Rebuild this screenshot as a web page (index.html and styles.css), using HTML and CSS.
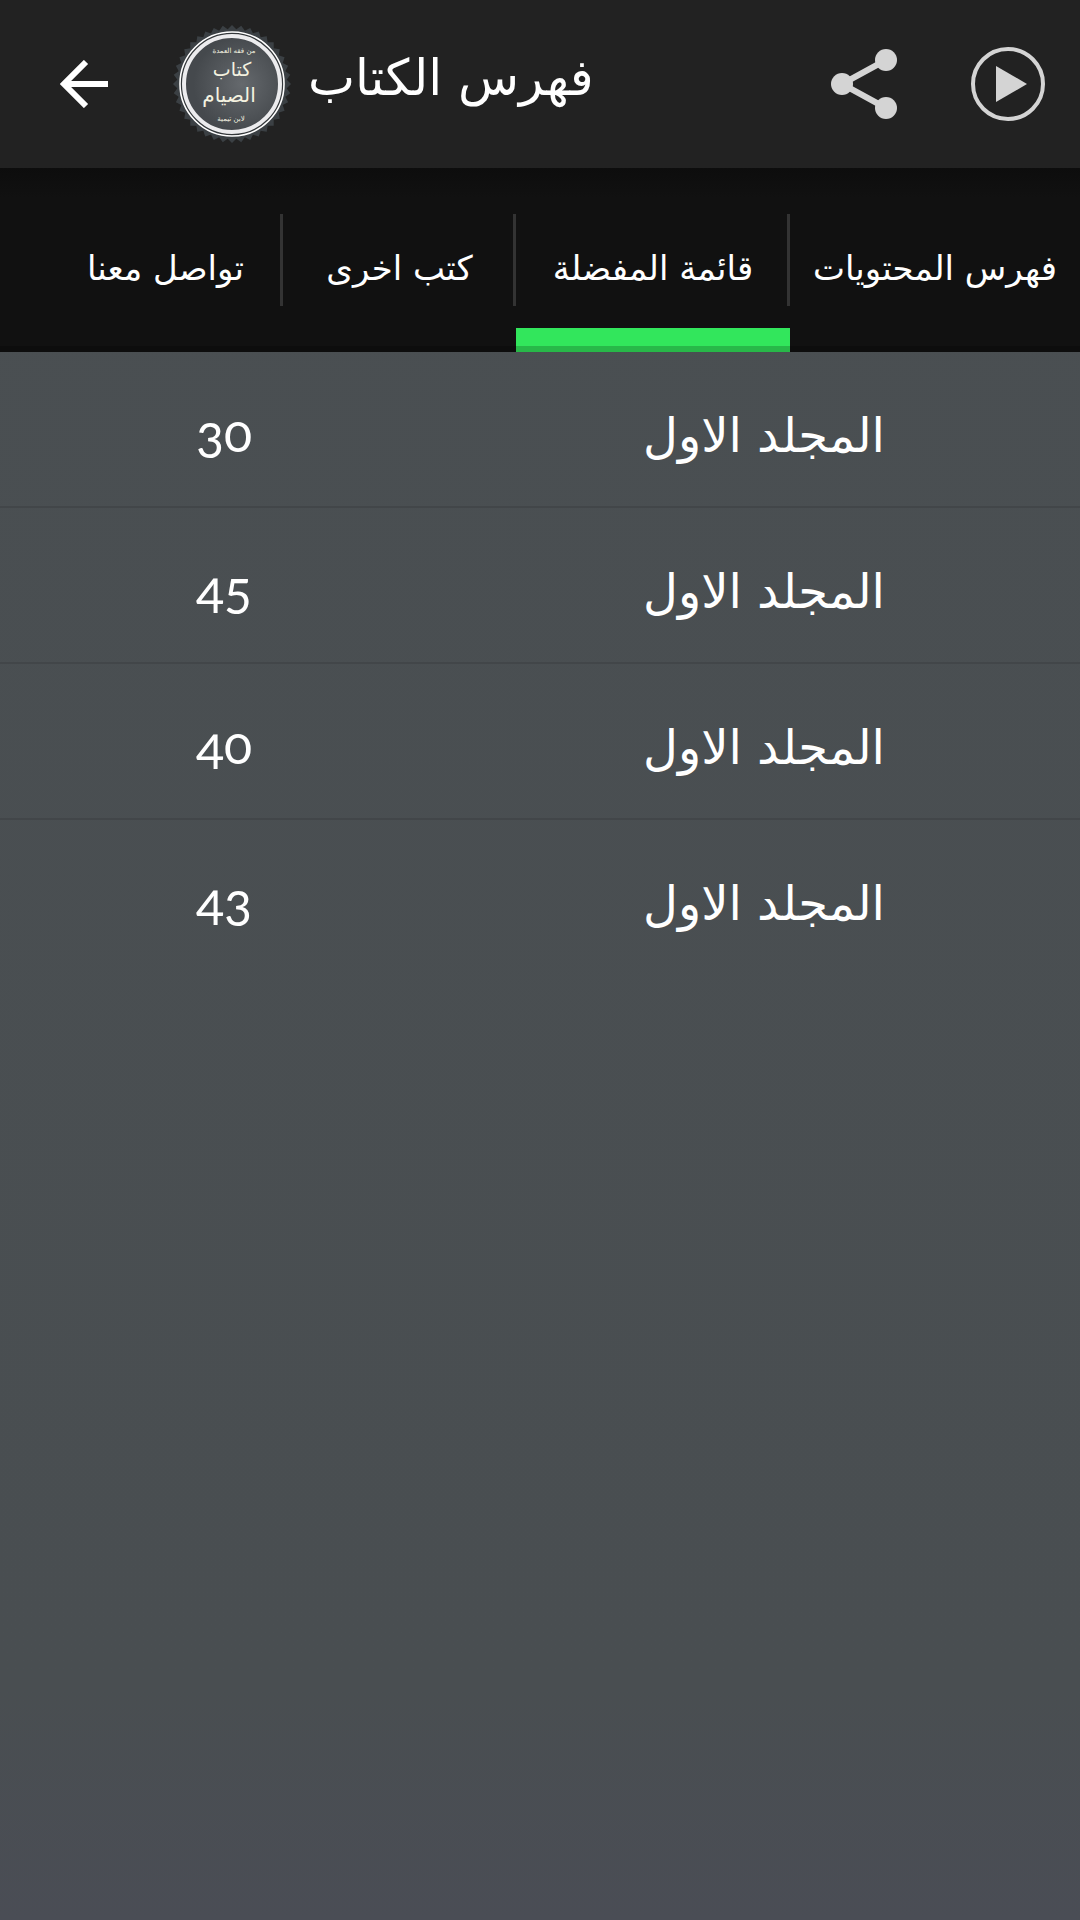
FILE: index.html
```html
<!DOCTYPE html>
<html lang="ar" dir="rtl">
<head>
    <meta charset="UTF-8">
    <meta name="viewport" content="width=device-width, initial-scale=1.0">
    <title>فهرس الكتاب</title>
    <link rel="stylesheet" href="styles.css">
</head>
<body>
    <header class="app-bar">
        <button class="icon-btn back-btn" type="button" aria-label="رجوع">
            <svg width="48" height="48" viewBox="0 0 48 48"><path d="M26 2 4 24l22 22M4 24h44" fill="none" stroke="#fff" stroke-width="6"/></svg>
        </button>
        <svg class="logo" width="120" height="120" viewBox="-60 -60 120 120">
            <defs>
                <radialGradient id="disc" cx="0.6" cy="0.5" r="0.5">
                    <stop offset="0" stop-color="#65696d"/>
                    <stop offset="1" stop-color="#45494d"/>
                </radialGradient>
                <path id="square" d="M0-59 59 0 0 59-59 0z"/>
            </defs>
            <!-- ten rotated squares make the 40 teeth of the seal -->
            <g fill="#3b4044">
                <use href="#square"/>
                <use href="#square" transform="rotate(9)"/>
                <use href="#square" transform="rotate(18)"/>
                <use href="#square" transform="rotate(27)"/>
                <use href="#square" transform="rotate(36)"/>
                <use href="#square" transform="rotate(45)"/>
                <use href="#square" transform="rotate(54)"/>
                <use href="#square" transform="rotate(63)"/>
                <use href="#square" transform="rotate(72)"/>
                <use href="#square" transform="rotate(81)"/>
            </g>
            <circle r="52" fill="#33373a" stroke="#fff" stroke-width="1.6"/>
            <circle r="48" fill="url(#disc)" stroke="#ececee" stroke-width="4"/>
            <g class="logo-text">
                <text x="2" y="-31" font-size="7">من فقه العمدة</text>
                <text x="0" y="-8" font-size="19">كتاب</text>
                <text x="-3" y="18" font-size="20">الصيام</text>
                <text x="-1" y="37" font-size="7">لابن تيمية</text>
            </g>
        </svg>
        <h1 class="title">فهرس الكتاب</h1>
        <button class="icon-btn share-btn" type="button" aria-label="مشاركة">
            <svg width="66" height="70" viewBox="0 0 66 70"><path d="M55 11 11 35l44 24" fill="none" stroke="#d4d4d4" stroke-width="6"/><g fill="#d4d4d4"><circle cx="11" cy="35" r="11"/><circle cx="55" cy="11" r="11"/><circle cx="55" cy="59" r="11"/></g></svg>
        </button>
        <button class="icon-btn" type="button" aria-label="تشغيل">
            <svg width="76" height="76" viewBox="0 0 76 76"><circle cx="38" cy="38" r="35" fill="none" stroke="#d4d4d4" stroke-width="4"/><path d="M26 20v36l31-18z" fill="#d4d4d4"/></svg>
        </button>
    </header>

    <nav class="tabs">
        <a class="tab" href="#contents">فهرس المحتويات</a>
        <a class="tab active" href="#favorites">قائمة المفضلة</a>
        <a class="tab" href="#books">كتب اخرى</a>
        <a class="tab" href="#contact">تواصل معنا</a>
    </nav>

    <main>
        <ul class="list" id="favorites">
            <li><a class="row" href="#30"><span>المجلد الاول</span><span class="page">30</span></a></li>
            <li><a class="row" href="#45"><span>المجلد الاول</span><span class="page">45</span></a></li>
            <li><a class="row" href="#40"><span>المجلد الاول</span><span class="page">40</span></a></li>
            <li><a class="row" href="#43"><span>المجلد الاول</span><span class="page">43</span></a></li>
        </ul>
    </main>
</body>
</html>
```
FILE: styles.css
```css
* {
    box-sizing: border-box;
}
body {
    margin: 0;
    min-height: 100vh;
    font-family: "DejaVu Sans", sans-serif;
    color: #fff;
    background: linear-gradient(#4a4f52, #494e51 88%, #4a4d55);
}
a {
    color: inherit;
    text-decoration: none;
}
.app-bar {
    direction: ltr;
    display: flex;
    align-items: center;
    height: 168px;
    padding: 0 34px 0 60px;
    background-color: #222;
}
.icon-btn {
    display: flex;
    padding: 0;
    border: none;
    background: none;
    cursor: pointer;
}
.logo {
    margin: 0 16px 0 64px;
}
.logo-text {
    fill: #f4f2e0;
    text-anchor: middle;
}
.title {
    flex: 1;
    margin: 0;
    padding-bottom: 12px;
    font-size: 50px;
    font-weight: normal;
    line-height: 72px;
}
.share-btn {
    margin-right: 73px;
}
.tabs {
    position: relative;
    display: grid;
    grid-template-columns: 290fr 274fr 233fr 235fr 48fr;
    height: 184px;
    background: linear-gradient(#0d0d0d, #111 30px);
}
.tabs::after {
    content: "";
    position: absolute;
    left: 0;
    right: 0;
    bottom: 0;
    height: 6px;
    background-color: rgba(0, 0, 0, 0.2);
}
.tab {
    display: flex;
    align-items: center;
    justify-content: center;
    padding-top: 16px;
    font-size: 34px;
    white-space: nowrap;
}
.tab + .tab {
    background: linear-gradient(#333, #333) right center / 3px 92px no-repeat;
}
.active {
    box-shadow: inset 0 -24px #32e65c;
}
.list {
    margin: 0;
    padding: 0;
    list-style: none;
}
.list li + li {
    border-top: 2px solid #424649;
}
.row {
    display: grid;
    grid-template-columns: 632fr 448fr;
    align-items: baseline;
    height: 154px;
    padding-top: 34px;
    font-size: 48px;
    line-height: 92px;
    text-align: center;
}
.page {
    font-family: Lato, sans-serif;
    font-size: 52px;
    font-feature-settings: "onum";
}
```
